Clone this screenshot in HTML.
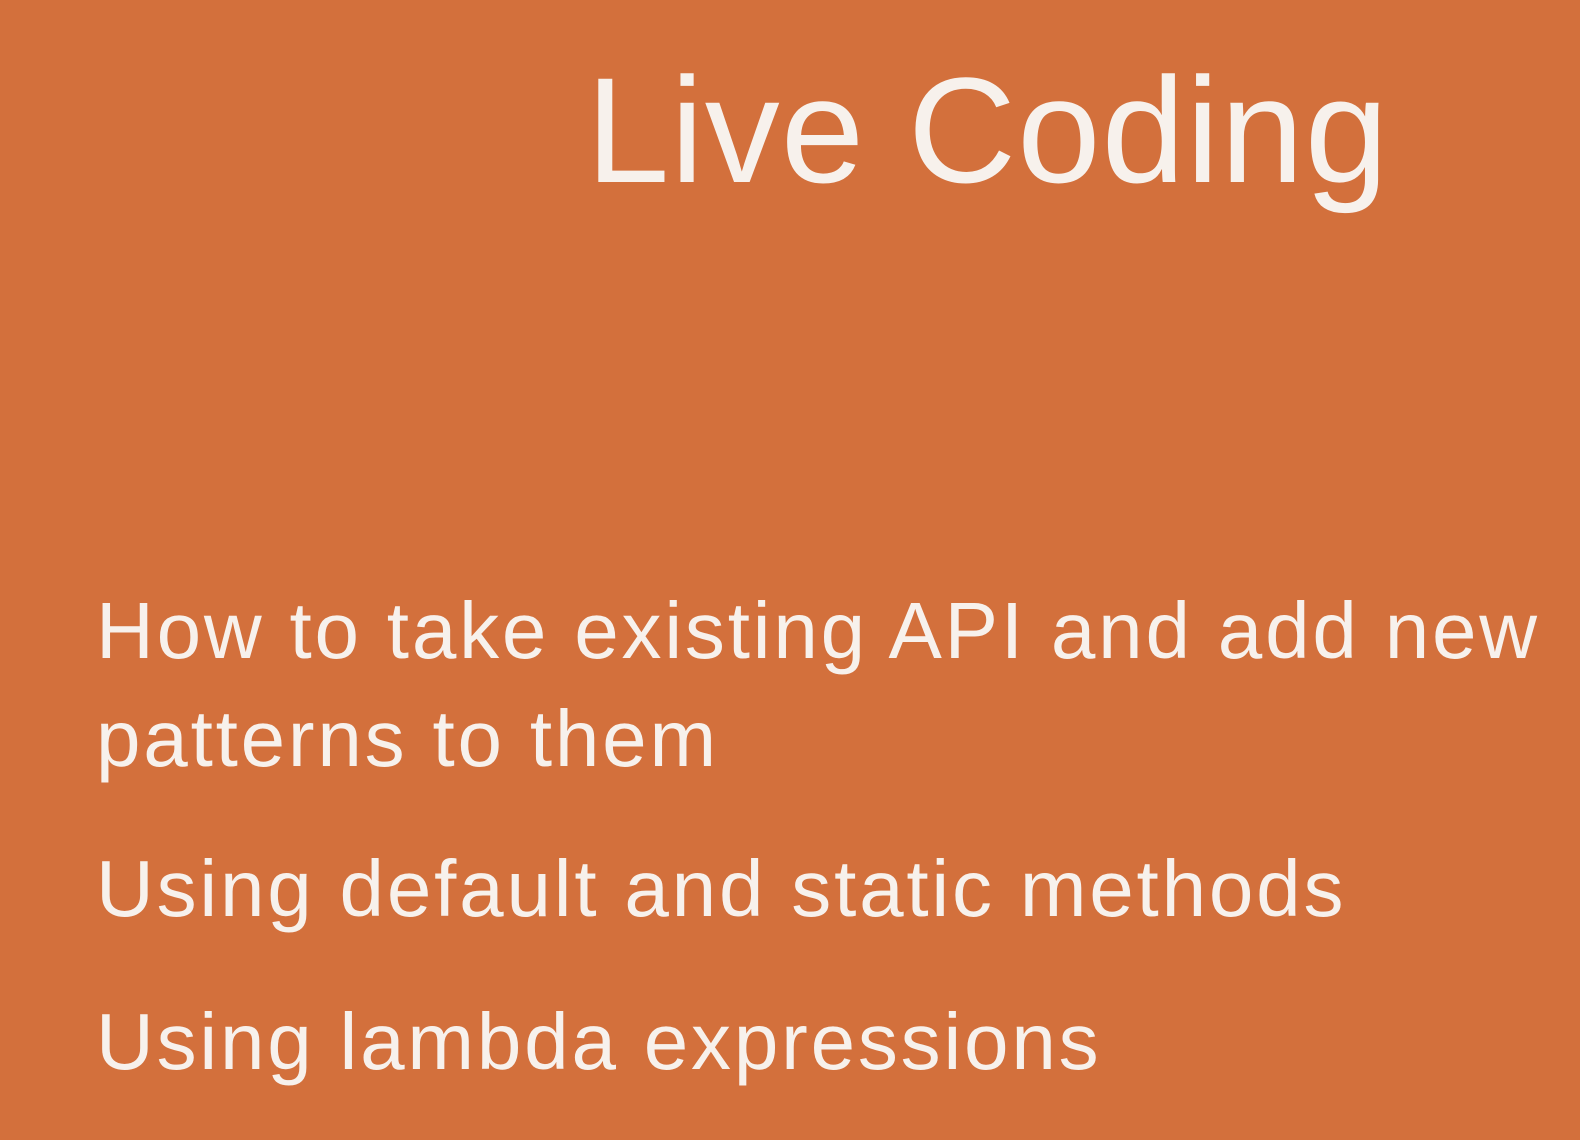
<!DOCTYPE html>
<html><head><meta charset="utf-8"><style>
html,body{margin:0;padding:0}
body{width:1580px;height:1140px;background:#D3703C;position:relative;overflow:hidden;font-family:"Liberation Sans",sans-serif;color:#F7F1EC}
div{position:absolute;white-space:nowrap;line-height:1}
.t{font-size:150px;left:586px;top:55px;letter-spacing:1px}
.b{font-size:80px;left:96px;letter-spacing:2.8px}
</style></head><body>
<div class="t">Live Coding</div>
<div class="b" style="top:591px">How to take existing API and add new</div>
<div class="b" style="top:699px">patterns to them</div>
<div class="b" style="top:849px">Using default and static methods</div>
<div class="b" style="top:1002px">Using lambda expressions</div>
</body></html>
